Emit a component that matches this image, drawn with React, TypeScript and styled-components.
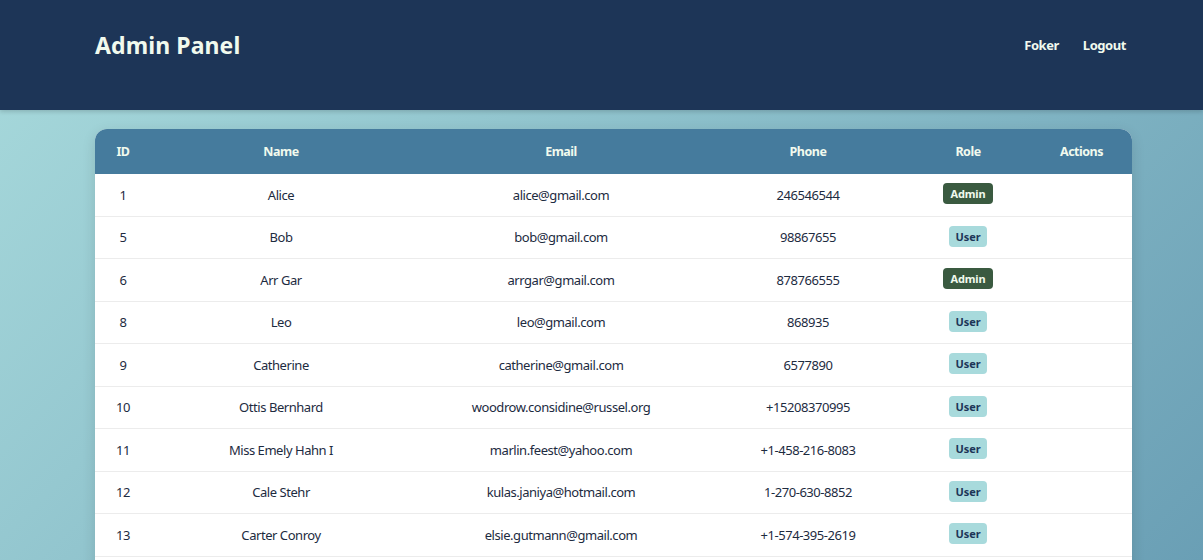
import React from "react";
import styled, { createGlobalStyle } from "styled-components";

const GlobalStyle = createGlobalStyle`
  html, body {
    margin: 0;
    padding: 0;
  }
  body {
    font-family: "Noto Sans", "Open Sans", Arial, sans-serif;
    background: linear-gradient(135deg, #a8dadc 0%, #6a9fb5 100%) fixed;
    min-height: 100vh;
    color: #1d3557;
  }
`;

const Header = styled.header`
  height: 110px;
  background: #1d3557;
  display: flex;
  align-items: center;
  justify-content: space-between;
  padding: 0 77px 20px 95px;
  box-sizing: border-box;
  box-shadow: 0 2px 4px rgba(0, 0, 0, 0.15);
  position: relative;
  z-index: 1;
`;

const Title = styled.h1`
  margin: 0;
  font-size: 23px;
  font-weight: 700;
  color: #f1faee;
  letter-spacing: 0.1px;
`;

const Nav = styled.nav`
  display: flex;
  align-items: center;
  gap: 24px;
`;

const NavLink = styled.a`
  color: #f1faee;
  font-size: 13px;
  font-weight: 700;
  letter-spacing: -0.45px;
  text-decoration: none;
  cursor: pointer;
`;

const Main = styled.main`
  padding: 19px 71px 40px 95px;
`;

const Card = styled.div`
  background: #ffffff;
  border-radius: 12px;
  overflow: hidden;
  box-shadow: 0 4px 14px rgba(0, 0, 0, 0.12);
`;

const Table = styled.table`
  width: 100%;
  border-collapse: collapse;
  table-layout: fixed;
  font-size: 13px;
`;

const HeadCell = styled.th`
  background: #457b9d;
  color: #f1faee;
  font-weight: 700;
  font-size: 12.5px;
  letter-spacing: -0.5px;
  height: 45px;
  padding: 0;
  text-align: center;
`;

const Row = styled.tr`
  border-bottom: 1px solid #ececec;
`;

const Cell = styled.td`
  height: 41.5px;
  padding: 0;
  text-align: center;
  color: #1d2b3f;
  letter-spacing: -0.45px;
  white-space: nowrap;
`;

const Badge = styled.span<{ $admin?: boolean }>`
  display: inline-block;
  padding: 3px 7px;
  border-radius: 4px;
  font-size: 11px;
  font-weight: 700;
  line-height: 15px;
  letter-spacing: -0.1px;
  background: ${(p) => (p.$admin ? "#3a5a40" : "#a8dadc")};
  color: ${(p) => (p.$admin ? "#f1faee" : "#1d3557")};
  position: relative;
  top: -1px;
`;

type User = { id: number; name: string; email: string; phone: string; admin?: boolean };

const users: User[] = [
  { id: 1, name: "Alice", email: "alice@gmail.com", phone: "246546544", admin: true },
  { id: 5, name: "Bob", email: "bob@gmail.com", phone: "98867655" },
  { id: 6, name: "Arr Gar", email: "arrgar@gmail.com", phone: "878766555", admin: true },
  { id: 8, name: "Leo", email: "leo@gmail.com", phone: "868935" },
  { id: 9, name: "Catherine", email: "catherine@gmail.com", phone: "6577890" },
  { id: 10, name: "Ottis Bernhard", email: "woodrow.considine@russel.org", phone: "+15208370995" },
  { id: 11, name: "Miss Emely Hahn I", email: "marlin.feest@yahoo.com", phone: "+1-458-216-8083" },
  { id: 12, name: "Cale Stehr", email: "kulas.janiya@hotmail.com", phone: "1-270-630-8852" },
  { id: 13, name: "Carter Conroy", email: "elsie.gutmann@gmail.com", phone: "+1-574-395-2619" },
  { id: 14, name: "Dana Kuhn", email: "dana.kuhn@yahoo.com", phone: "+1-312-555-0148" },
  { id: 15, name: "Marlee Roob", email: "marlee.roob@gmail.com", phone: "1-646-555-0193" },
];

const widths = [56, 260, 300, 194, 126, 101];

export default function App() {
  return (
    <>
      <GlobalStyle />
      <Header>
        <Title>Admin Panel</Title>
        <Nav>
          <NavLink>Foker</NavLink>
          <NavLink>Logout</NavLink>
        </Nav>
      </Header>
      <Main>
        <Card>
          <Table>
            <colgroup>
              {widths.map((w, i) => (
                <col key={i} style={{ width: w }} />
              ))}
            </colgroup>
            <thead>
              <tr>
                <HeadCell>ID</HeadCell>
                <HeadCell>Name</HeadCell>
                <HeadCell>Email</HeadCell>
                <HeadCell>Phone</HeadCell>
                <HeadCell>Role</HeadCell>
                <HeadCell>Actions</HeadCell>
              </tr>
            </thead>
            <tbody>
              {users.map((u) => (
                <Row key={u.id}>
                  <Cell>{u.id}</Cell>
                  <Cell>{u.name}</Cell>
                  <Cell>{u.email}</Cell>
                  <Cell>{u.phone}</Cell>
                  <Cell>
                    <Badge $admin={u.admin}>{u.admin ? "Admin" : "User"}</Badge>
                  </Cell>
                  <Cell />
                </Row>
              ))}
            </tbody>
          </Table>
        </Card>
      </Main>
    </>
  );
}
